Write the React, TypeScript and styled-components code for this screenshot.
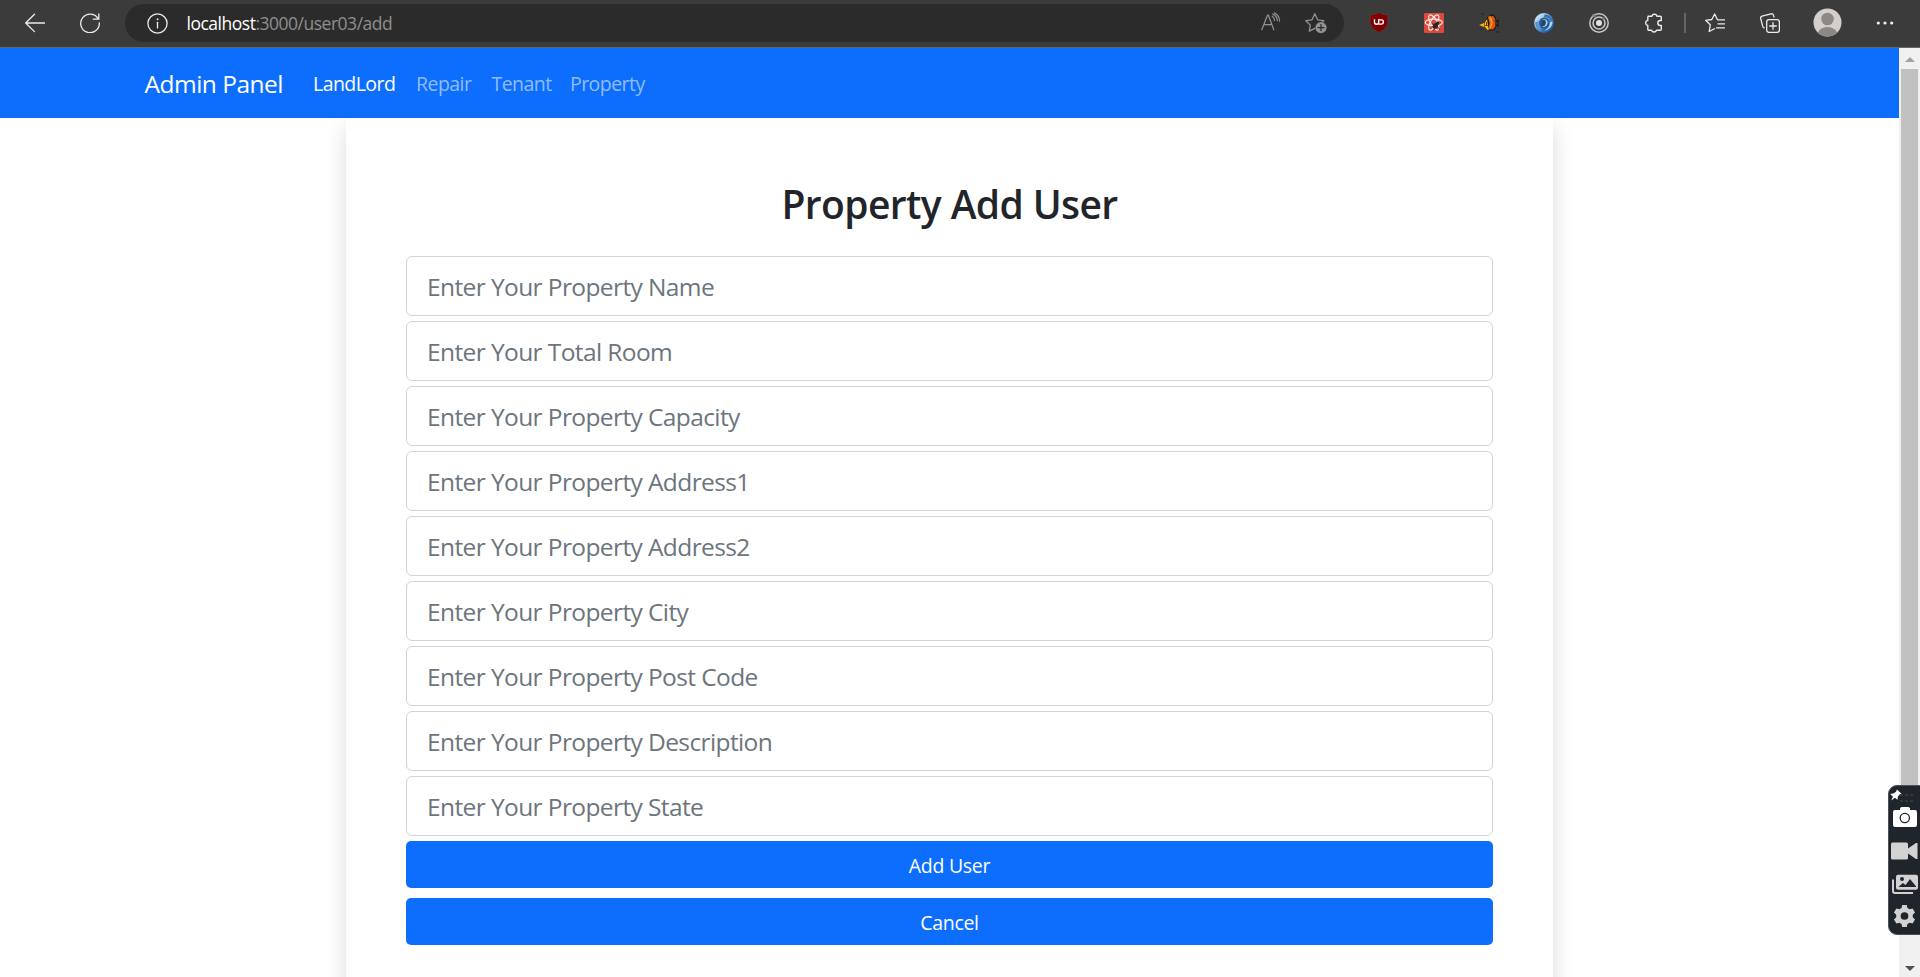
import React from 'react';
import styled, { createGlobalStyle } from 'styled-components';

const GlobalStyle = createGlobalStyle`
  *, *::before, *::after { box-sizing: border-box; }
  html, body { margin: 0; height: 100%; overflow: hidden; background: #fff; }
  body { font-family: 'Open Sans', 'Noto Sans', sans-serif; color: #212529; }
  button, input { font-family: inherit; }
`;

const Window = styled.div`
  display: flex;
  flex-direction: column;
  width: 1920px;
  height: 977px;
  overflow: hidden;
`;

const Toolbar = styled.header`
  display: flex;
  align-items: center;
  flex: 0 0 48px;
  padding: 0 7.5px 2px;
  background: #3b3b3b;
  border-bottom: 1px solid #666;
`;

const ToolCell = styled.div<{ $width?: number }>`
  display: flex;
  align-items: center;
  justify-content: center;
  flex: 0 0 ${(p) => p.$width ?? 55}px;
  height: 39px;
`;

const AddressBar = styled.div`
  display: flex;
  align-items: center;
  flex: 0 0 1219px;
  height: 38px;
  margin: 1px 7.5px 0;
  padding: 0 17px 0 22px;
  border-radius: 19px;
  background: #2b2b2b;
`;

const Url = styled.div`
  flex: 1;
  padding: 0 0 1px 18.5px;
  font-size: 17.5px;
  line-height: 24px;
  letter-spacing: -0.49px;
  color: #8f8f8f;
`;

const UrlHost = styled.span`
  color: #fff;
`;

const AddressActions = styled.div`
  display: flex;
  gap: 24px;
`;

const Separator = styled.div`
  flex: 0 0 2px;
  height: 20px;
  margin: 0 2px;
  background: #646464;
`;

const Viewport = styled.div`
  display: flex;
  flex: 1;
  min-height: 0;
`;

const Page = styled.main`
  flex: 1;
  min-width: 0;
  overflow: hidden;
`;

const Navbar = styled.nav`
  position: relative;
  z-index: 1;
  display: flex;
  align-items: center;
  height: 70px;
  padding: 2px 0 0 144.5px;
  background: #0d6efd;
`;

const Brand = styled.a`
  width: 168.5px;
  font-size: 24.5px;
  line-height: 38px;
  letter-spacing: -0.5px;
  color: #fff;
`;

const NavLink = styled.a<{ $active?: boolean; $width: number }>`
  width: ${(p) => p.$width}px;
  font-size: 19.5px;
  line-height: 30px;
  letter-spacing: -0.55px;
  color: ${(p) => (p.$active ? '#fff' : 'rgba(255, 255, 255, 0.55)')};
`;

const Card = styled.section`
  width: 1207px;
  min-height: 1000px;
  margin: 0 auto;
  padding: 62px 60px 60px;
  background: #fff;
  box-shadow: 0 10px 20px rgba(0, 0, 0, 0.15);
`;

const Title = styled.h2`
  margin: 0 0 28px;
  font-size: 39px;
  font-weight: 600;
  line-height: 48px;
  letter-spacing: -0.6px;
  text-align: center;
`;

const Form = styled.form`
  display: flex;
  flex-direction: column;
  gap: 5px;
`;

const Field = styled.input`
  display: block;
  width: 100%;
  height: 60px;
  padding: 10px 20px;
  border: 1px solid #ced4da;
  border-radius: 6px;
  outline: none;
  background: #fff;
  font-size: 24.5px;
  letter-spacing: -0.6px;
  &::placeholder { color: #6c757d; opacity: 1; }
`;

const Button = styled.button`
  height: 47px;
  margin: 0 0 5px;
  padding: 1px 0 0;
  border: 0;
  border-radius: 5px;
  background: #0d6efd;
  color: #fff;
  font-size: 19.5px;
  letter-spacing: -0.3px;
`;

const Scrollbar = styled.div`
  display: flex;
  flex-direction: column;
  align-items: center;
  flex: 0 0 21px;
  background: #f1f1f1;
`;

const ScrollArrow = styled.div<{ $down?: boolean }>`
  display: flex;
  align-items: center;
  justify-content: center;
  height: 21px;
  padding-top: ${(p) => (p.$down ? 3 : 2)}px;
  margin-top: ${(p) => (p.$down ? 'auto' : 0)};
`;

const ScrollThumb = styled.div`
  width: 17px;
  height: 790px;
  background: #c1c1c1;
`;

const CaptureDock = styled.aside`
  position: fixed;
  top: 785px;
  left: 1888px;
  display: flex;
  flex-direction: column;
  align-items: center;
  width: 40px;
  height: 150px;
  padding: 1px 7px 0 0;
  border: 1px solid #4b5157;
  border-radius: 9px;
  background: #20252b;
`;

const DockRow = styled.div<{ $height: number }>`
  display: flex;
  align-items: center;
  justify-content: center;
  flex: 0 0 ${(p) => p.$height}px;
  width: 30px;
`;

const line = { fill: 'none', stroke: '#ececec', strokeWidth: 1.3, strokeLinecap: 'round', strokeLinejoin: 'round' } as const;

const BackIcon = () => (
  <svg width="20" height="20" viewBox="0 0 20 20" {...line}>
    <path d="M19.5 10H.8M9.5 1.2.7 10l8.8 8.6" />
  </svg>
);

const ReloadIcon = () => (
  <svg width="20" height="20" viewBox="0 0 20 20" {...line}>
    <path d="M18.2 6A9.3 9.3 0 1 0 19.3 10M18.8.8v5.4h-5.5" />
  </svg>
);

const InfoIcon = () => (
  <svg width="21" height="21" viewBox="0 0 21 21" {...line}>
    <circle cx="10.5" cy="10.5" r="9.6" />
    <path d="M10.5 9.3v5.6" />
    <circle cx="10.5" cy="6.2" r=".7" fill="#ececec" strokeWidth=".4" />
  </svg>
);

const ReadAloudIcon = () => (
  <svg width="20" height="20" viewBox="0 0 20 20" {...line} stroke="#929292" strokeWidth="1.2">
    <path d="M.8 17.8 6.600 3h.7l5.500 14.800M2.800 12.700h8.200M11.200 4.200c1.400.8 2.300 2.300 2.300 4.200M13.200.8c3.400 1.700 5.300 4.600 5.400 8.400M11.800 2.100c2.900 1.200 4.400 3.500 4.500 6.600" />
  </svg>
);

const AddFavoriteIcon = () => (
  <svg width="22" height="22" viewBox="0 0 22 22" {...line} stroke="#929292">
    <path d="M9.800 16.300 4.300 19.100l1-6L.8 8.700 7 7.800l2.800-6.100 2.800 6.100 6.200.9-1.200 1.200" />
    <circle cx="16" cy="15.600" r="5.600" fill="#929292" stroke="none" />
    <path d="M16 12.600v6M13 15.600h6" stroke="#2b2b2b" />
  </svg>
);

const ShieldIcon = () => (
  <svg width="20" height="21" viewBox="0 0 20 21">
    <path d="M10 .4c2.600 1.800 5.500 2.500 8.800 2.500v6.500c0 5.200-3.800 8.500-8.800 11.100-5-2.600-8.800-5.900-8.800-11.100V2.900C4.500 2.900 7.400 2.200 10 .4Z" fill="#800000" stroke="#6a4040" strokeWidth=".5" />
    <path d="M5.500 7.300v2.900a2.100 2.100 0 0 0 4.200 0V7.300M10.300 7.900h2a2.100 2.100 0 0 1 0 4.200H9.600" fill="none" stroke="#fff" strokeWidth="1.400" />
  </svg>
);

const ReactBugIcon = () => (
  <svg width="20" height="20" viewBox="0 0 20 20" fill="none" stroke="#f9e5e2" strokeWidth="1.200">
    <rect width="20" height="20" rx="1.200" fill="#dc4a3d" stroke="none" />
    <ellipse cx="9.800" cy="9.500" rx="8.600" ry="3.300" />
    <ellipse cx="9.800" cy="9.500" rx="8.600" ry="3.300" transform="rotate(60 9.800 9.500)" />
    <ellipse cx="9.800" cy="9.500" rx="8.600" ry="3.300" transform="rotate(120 9.800 9.500)" />
    <ellipse cx="11.500" cy="12.800" rx="2.300" ry="3.300" fill="#252525" stroke="none" transform="rotate(35 11.500 12.800)" />
    <circle cx="13.700" cy="9.900" r="1.400" fill="#252525" stroke="none" />
    <path d="m8 10.500 2.500 1.500M7.800 13.500h3M9.700 17.500l1.600-3M12.500 12l3-1M12.500 13l2.800 2.500v1.500" stroke="#252525" strokeWidth=".8" />
  </svg>
);

const FishIcon = () => (
  <svg width="20" height="20" viewBox="0 0 20 20">
    <path d="m1 12 4-2L8.500 4 11 1.500h4l2 3.200V15l-2 2.500H9l-4-3.800Z" fill="#261a12" />
    <path d="m0 12 5-2v4Z" fill="#f0b51c" />
    <path d="M5.500 10 8 6l1.800 11H8.500L5.500 13.500Z" fill="#f5bd19" />
    <path d="m9 4 2-1.500 1.800 6L11 16.800 9.800 16l.8-6Z" fill="#f06a1c" />
    <path d="M12.500 3h1.800l2 3.500v7L14 16.500h-2l1.500-7Z" fill="#ec4e19" />
    <path d="m11.600 3.500 1.500 6-1.600 6" fill="none" stroke="#f9c828" strokeWidth="1.100" />
    <path d="M7.500 9v3M6 12.500h3M15 7v1.500" stroke="#8a3512" strokeWidth="1" />
    <path d="M17 8.500 19 7v6.500l-2-1.800" fill="none" stroke="#171717" strokeWidth="1.100" />
    <path d="M2.500 0h2v2h-2zM17.500 18h2v2h-2zM1.500 15.500H3V17H1.500z" fill="#202a28" />
  </svg>
);

const SwirlIcon = () => (
  <svg width="20" height="20" viewBox="0 0 20 20">
    <defs>
      <linearGradient id="swirl" x1="0" y1="0" x2="1" y2="1">
        <stop offset="0" stopColor="#f4faff" />
        <stop offset=".3" stopColor="#a6caeb" />
        <stop offset=".62" stopColor="#3577b9" />
        <stop offset="1" stopColor="#14498b" />
      </linearGradient>
    </defs>
    <circle cx="10" cy="10" r="9.900" fill="url(#swirl)" />
    <path d="M10.500 1.500c4.500-.3 7.700 3 7.600 7C16 5 13.500 4 10 4.300Z" fill="#3275b5" />
    <path d="M1 9c.5 5 3 8.300 7.500 9.500-3.300-3-4.600-6-3.700-10C3.500 8.300 2 8.500 1 9Z" fill="#5795cf" />
    <path d="M18.500 8.500c.2 4.500-3 8.500-8 9 3.300-1.500 5.500-4.500 5.300-8.500Z" fill="#b3d3ef" />
    <ellipse cx="10.200" cy="10" rx="5.200" ry="5.500" fill="#205b99" />
    <path d="M8.300 6.800c3.500-2 6.500 1 5 4.500-1 2.300-3 3.200-5 2.500 2.400-.5 3.600-2.300 3.200-4.200-.3-1.500-1.400-2.500-3.200-2.800Z" fill="#a9cdec" />
    <ellipse cx="9.700" cy="10" rx="1.900" ry="3.100" fill="#384149" transform="rotate(15 9.700 10)" />
  </svg>
);

const TargetIcon = () => (
  <svg width="20" height="20" viewBox="0 0 20 20" fill="none" stroke="#c8c8c8" strokeWidth="1.500">
    <circle cx="10" cy="10" r="9.200" />
    <circle cx="10" cy="10" r="6" />
    <circle cx="10" cy="10" r="3" fill="#e2e2e2" stroke="none" />
    <circle cx="5" cy="2.500" r="1.800" fill="#898989" stroke="none" />
    <circle cx="14.500" cy="5.500" r="1.500" fill="#777" stroke="none" />
  </svg>
);

const PuzzleIcon = () => (
  <svg width="20" height="20" viewBox="0 0 20 20" {...line} strokeWidth="1.400">
    <path d="M4 3.200h3.800a2.700 2.700 0 0 1 5.200 0h3.300a1 1 0 0 1 1 1v3.300h-1a2.500 2.500 0 0 0 0 5h1v3.800a1 1 0 0 1-1 1h-3.800a2.600 2.600 0 0 1-4.900 0H4.800a1 1 0 0 1-1-1v-3.800a2.600 2.600 0 0 1 0-5.100V4.200" />
  </svg>
);

const FavoritesIcon = () => (
  <svg width="20" height="20" viewBox="0 0 20 20" {...line}>
    <path d="M12.500 6.800 9.700 1 6.800 6.500.6 7.300l4.700 4.500L4.200 18.500l5.300-2.800M12.500 6.800h7M13 10.800h6.500M11.500 14.800h8" />
  </svg>
);

const CollectionsIcon = () => (
  <svg width="20" height="20" viewBox="0 0 20 20" {...line}>
    <rect x="6.700" y="6.700" width="12.700" height="12.700" rx="2.300" />
    <path d="M13 9.700v6.600M9.700 13h6.600M14 4.200l-.5-1.800A2 2 0 0 0 11 .8L2 3.200A2 2 0 0 0 .7 5.600l2 7.800a2 2 0 0 0 1.500 1.400" />
  </svg>
);

const AvatarIcon = () => (
  <svg width="29" height="29" viewBox="0 0 29 29">
    <defs><clipPath id="avatar"><circle cx="14.500" cy="14.500" r="14" /></clipPath></defs>
    <circle cx="14.500" cy="14.500" r="14" fill="#d3d0cc" />
    <g fill="#8d8884" clipPath="url(#avatar)">
      <circle cx="14.500" cy="11" r="6.300" />
      <ellipse cx="14.500" cy="27" rx="10" ry="8" />
    </g>
  </svg>
);

const MoreIcon = () => (
  <svg width="18" height="4" viewBox="0 0 18 4" fill="#f0f0f0">
    <circle cx="2.300" cy="2" r="1.600" /><circle cx="9" cy="2" r="1.600" /><circle cx="15.700" cy="2" r="1.600" />
  </svg>
);

const PinIcon = () => (
  <svg width="30" height="16" viewBox="0 0 30 16">
    <path d="m7 1.500 4.500 4.200-2 .8-1.700 2.200-.2 3-2.700-2L1.200 12.500 3 8.800.2 6l3-.4 2.600-1.700Z" fill="#fff" />
    <path d="M10 6h3v2h-3zM15 6h3v2h-3zM20 6h3v2h-3zM10 12h3v2h-3zM15 12h3v2h-3zM20 12h3v2h-3z" fill="#33393c" />
  </svg>
);

const CameraIcon = () => (
  <svg width="24" height="20" viewBox="0 0 24 20">
    <path d="M2 3h5V1.200L8.200 0h7.600L17 1.200V3h5a2 2 0 0 1 2 2v13a2 2 0 0 1-2 2H2a2 2 0 0 1-2-2V5a2 2 0 0 1 2-2Z" fill="#fff" />
    <circle cx="11.800" cy="11" r="4.600" fill="none" stroke="#20252b" strokeWidth="1.300" />
  </svg>
);

const VideoIcon = () => (
  <svg width="27" height="18" viewBox="0 0 27 18" fill="#d2d2d2">
    <path d="M1.500.5h14A1.500 1.500 0 0 1 17 2v4.500L25 1h1.500v16H25l-8-5.500V16a1.500 1.500 0 0 1-1.500 1.500h-14A1.500 1.500 0 0 1 0 16V2A1.500 1.500 0 0 1 1.500.5Z" />
  </svg>
);

const GalleryIcon = () => (
  <svg width="26" height="20" viewBox="0 0 26 20">
    <path d="M1 5.500V17a2 2 0 0 0 2 2h18" fill="none" stroke="#d2d2d2" strokeWidth="2" />
    <rect x="4" y=".7" width="22" height="15" rx="2" fill="#d2d2d2" />
    <circle cx="10" cy="5" r="2" fill="#20252b" />
    <path d="m6.500 13 4.300-4 2.700 2 4.500-6 6 7.200v.8Z" fill="#20252b" />
  </svg>
);

const GearIcon = () => (
  <svg width="23" height="22" viewBox="0 0 24 24">
    <path fillRule="evenodd" d="M9.500 0h5l.7 3.300 2.400 1.400 3.200-1 2.700 4.600-2.500 2.300v2.800l2.500 2.300-2.700 4.600-3.200-1-2.400 1.400-.7 3.300h-5l-.7-3.300-2.400-1.400-3.200 1-2.700-4.600L3 13.400v-2.800L.5 8.300l2.700-4.600 3.200 1 2.400-1.400ZM12 7.800a4.200 4.200 0 1 0 0 8.400 4.200 4.200 0 0 0 0-8.400Z" fill="#d2d2d2" />
  </svg>
);

const extensions = [ShieldIcon, ReactBugIcon, FishIcon, SwirlIcon, TargetIcon, PuzzleIcon];

const navItems = [
  { label: 'LandLord', width: 103, active: true },
  { label: 'Repair', width: 75.5 },
  { label: 'Tenant', width: 78.5 },
  { label: 'Property', width: 90 },
];

const fields = [
  'Property Name',
  'Total Room',
  'Property Capacity',
  'Property Address1',
  'Property Address2',
  'Property City',
  'Property Post Code',
  'Property Description',
  'Property State',
];

export default function App() {
  return (
    <Window>
      <GlobalStyle />
      <Toolbar>
        <ToolCell><BackIcon /></ToolCell>
        <ToolCell><ReloadIcon /></ToolCell>
        <AddressBar>
          <InfoIcon />
          <Url><UrlHost>localhost</UrlHost>:3000/user03/add</Url>
          <AddressActions>
            <ReadAloudIcon />
            <AddFavoriteIcon />
          </AddressActions>
        </AddressBar>
        {extensions.map((Icon, i) => <ToolCell key={i}><Icon /></ToolCell>)}
        <Separator />
        <ToolCell><FavoritesIcon /></ToolCell>
        <ToolCell><CollectionsIcon /></ToolCell>
        <ToolCell $width={60}><AvatarIcon /></ToolCell>
        <ToolCell $width={54}><MoreIcon /></ToolCell>
      </Toolbar>
      <Viewport>
        <Page>
          <Navbar>
            <Brand>Admin Panel</Brand>
            {navItems.map((n) => (
              <NavLink key={n.label} $active={n.active} $width={n.width}>{n.label}</NavLink>
            ))}
          </Navbar>
          <Card>
            <Title>Property Add User</Title>
            <Form>
              {fields.map((f) => <Field key={f} placeholder={`Enter Your ${f}`} />)}
              <Button type="button">Add User</Button>
              <Button type="button">Cancel</Button>
            </Form>
          </Card>
        </Page>
        <Scrollbar>
          <ScrollArrow>
            <svg width="10" height="5" viewBox="0 0 10 5"><path d="m5 0 5 5H0Z" fill="#a3a3a3" /></svg>
          </ScrollArrow>
          <ScrollThumb />
          <ScrollArrow $down>
            <svg width="10" height="5" viewBox="0 0 10 5"><path d="M0 0h10L5 5Z" fill="#505050" /></svg>
          </ScrollArrow>
        </Scrollbar>
      </Viewport>
      <CaptureDock>
        <DockRow $height={17}><PinIcon /></DockRow>
        <DockRow $height={26}><CameraIcon /></DockRow>
        <DockRow $height={41}><VideoIcon /></DockRow>
        <DockRow $height={26}><GalleryIcon /></DockRow>
        <DockRow $height={38}><GearIcon /></DockRow>
      </CaptureDock>
    </Window>
  );
}
